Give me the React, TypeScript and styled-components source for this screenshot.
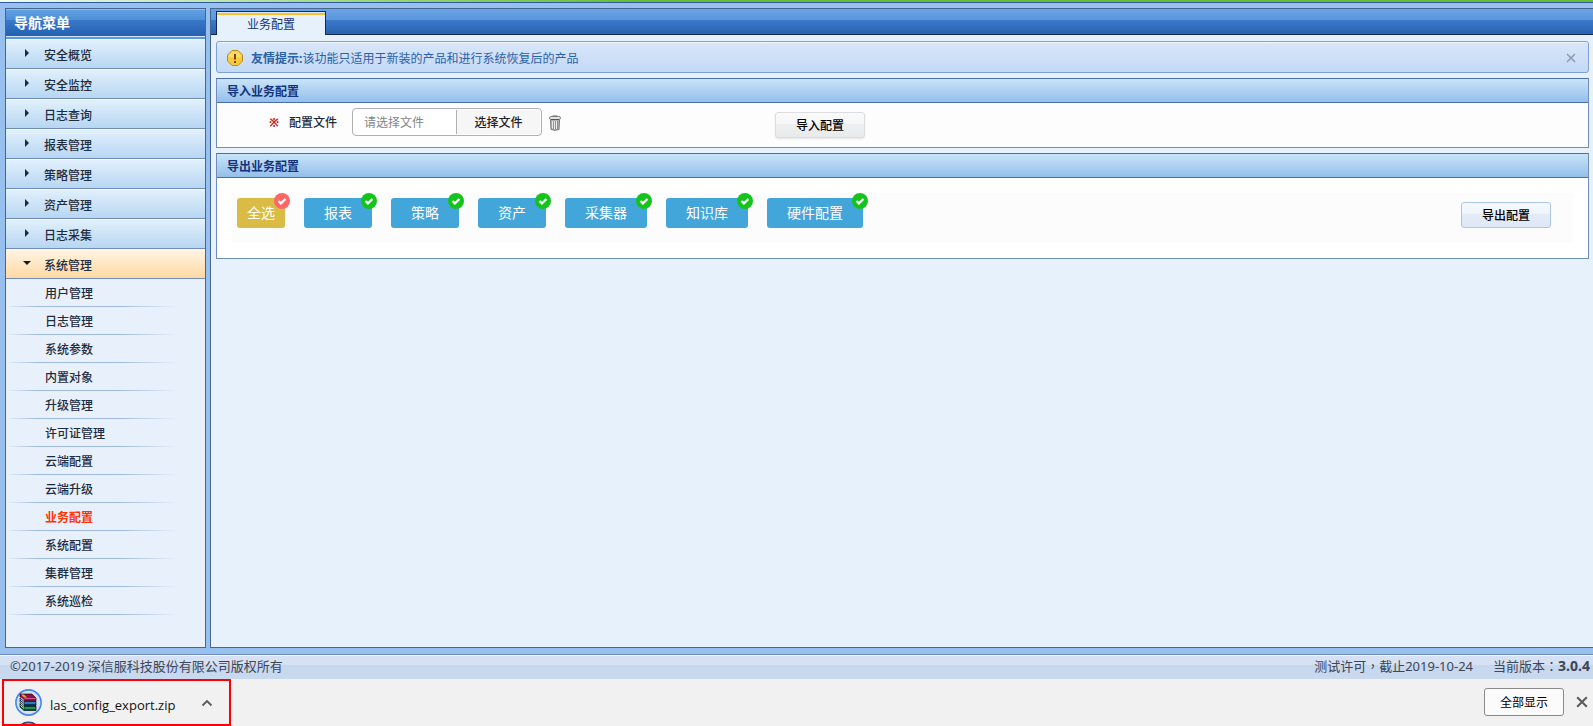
import React from "react";
import styled, { createGlobalStyle } from "styled-components";

const Global = createGlobalStyle`
  *, *::before, *::after { box-sizing: border-box; }
  body { margin: 0; background: #98c0ee; }
  body, button, input { font-family: "Noto Sans", "Noto Sans CJK SC", sans-serif; font-size: 12px; }
  button { cursor: pointer; margin: 0; }
  ul { list-style: none; margin: 0; padding: 0; }
  h2, p { margin: 0; }
  a { color: inherit; text-decoration: none; }
`;

const Page = styled.div`
  display: flex;
  flex-direction: column;
  min-height: 100vh;
  color: #1e2c40;
`;

const TopStrip = styled.div`
  height: 3px;
  border-bottom: 1px solid #2c5a9c;
  background: linear-gradient(90deg, #f4fbf2 0, #a6da8c 320px, #66bd30 640px);
`;

const Workspace = styled.div`
  flex: 1;
  display: flex;
  gap: 4px;
  padding: 5px 0 6px 5px;
`;

const Sidebar = styled.nav`
  width: 201px;
  flex: none;
  border: 1px solid #456592;
  background: #e8f0fc;
`;

const SidebarTitle = styled.h2`
  height: 30px;
  padding: 0 8px;
  border-top: 1px solid #8fbcf0;
  border-bottom: 2px solid #5a9be0;
  background: linear-gradient(#5f9fe2 0, #4f8fd8 10px, #3a78c8 10px, #2560b2 26px, #d5e8fb 26px);
  color: #fff;
  font-size: 14px;
  line-height: 26px;
`;

const MenuItem = styled.a<{ $open?: boolean }>`
  display: flex;
  align-items: center;
  height: 30px;
  padding: 1px 0 0 17px;
  gap: 15px;
  border-top: 1px solid #f4faff;
  border-bottom: 1px solid #6f8db8;
  background: ${(p) =>
    p.$open ? "linear-gradient(#fff4e2, #ffd9a4)" : "linear-gradient(#e1f0fc, #b7d6f2)"};
  font-weight: 500;
`;

const Arrow = styled.svg`
  width: 6px;
  height: 8px;
  overflow: visible;
  margin-bottom: 4px;
`;

const SubItem = styled.a<{ $active?: boolean }>`
  display: block;
  height: 28px;
  padding-left: 39px;
  line-height: 30px;
  font-weight: ${(p) => (p.$active ? 700 : 500)};
  color: ${(p) => (p.$active ? "#ff3300" : "inherit")};
  background: linear-gradient(90deg, transparent, #9db9dc 32px, #9db9dc 112px, transparent 172px)
    bottom / 100% 1px no-repeat;
`;

const Main = styled.main`
  flex: 1;
  min-width: 0;
  border: 1px solid #456592;
  border-right: 0;
  background: #e6f1fc;
`;

const TabBar = styled.div`
  display: flex;
  align-items: flex-end;
  height: 26px;
  padding-left: 5px;
  background: linear-gradient(#6ba3e4 0, #5b96dc 11px, #3d7acb 11px, #2a62b2 25px, #12295a 25px);
`;

const Tab = styled.button`
  width: 110px;
  height: 24px;
  padding: 3px 0 0;
  border: 1px solid #12295a;
  border-bottom: 0;
  background: linear-gradient(#dce8f6 1px, #fbc02d 1px, #fbc02d 3px, #e6f1fc 3px);
  color: #14327c;
  line-height: 20px;
`;

const Content = styled.div`
  display: flex;
  flex-direction: column;
  gap: 5px;
  padding: 6px 4px 6px 5px;
`;

const Notice = styled.div`
  display: flex;
  align-items: center;
  height: 32px;
  padding: 2px 12px 0 10px;
  gap: 8px;
  border: 1px solid #7aa3d2;
  border-radius: 3px;
  box-shadow: inset 0 1px #f2f7fe;
  background: linear-gradient(#d8e6fa, #c5d9f4);
  color: #2a62a8;
  svg { flex: none; }
`;

const NoticeText = styled.p`
  flex: 1;
`;

const IconButton = styled.button`
  display: flex;
  padding: 0;
  border: 0;
  background: none;
`;

const Panel = styled.section`
  border: 1px solid #6f8db8;
  border-top-color: #4a70a4;
  background: #fff;
`;

const PanelTitle = styled.h2`
  height: 24px;
  padding-left: 10px;
  border-bottom: 1px solid #4a70a4;
  background: linear-gradient(#c8e4f9, #94bfea);
  color: #14327c;
  font-size: 12px;
  line-height: 25px;
`;

const ImportRow = styled.form`
  display: flex;
  align-items: flex-start;
  height: 44px;
  padding: 5px 0 0 52px;
  background: #fdfdfd;
`;

const Required = styled.span`
  width: 20px;
  color: #c8281e;
  font-weight: 700;
  line-height: 30px;
`;

const FieldLabel = styled.label`
  width: 63px;
  line-height: 30px;
  font-weight: 500;
`;

const FilePicker = styled.div`
  display: flex;
  width: 190px;
  height: 28px;
  margin-right: 7px;
  padding: 1px;
  border: 1px solid #b0b0b0;
  border-radius: 4px;
  background: #fff;
`;

const FileInput = styled.input`
  width: 103px;
  padding: 0 0 0 10px;
  border: 0;
  border-right: 1px solid #b0b0b0;
  background: transparent;
  &::placeholder { color: #858585; opacity: 1; }
`;

const BrowseButton = styled.button`
  flex: 1;
  padding: 0;
  border: 0;
  background: #f6f6f6;
  color: #222;
  font-weight: 500;
`;

const ActionButton = styled.button<{ $blue?: boolean }>`
  width: 90px;
  height: 26px;
  padding: 0;
  border: 1px solid ${(p) => (p.$blue ? "#a9c6e6" : "#dcdde0")};
  border-radius: 3px;
  background: ${(p) =>
    p.$blue
      ? "linear-gradient(#f6fafe 0, #eff4fc 46%, #e3ebf7 46%, #dfe8f5)"
      : "linear-gradient(#fafafa 0, #f5f6f6 46%, #eeeff0 46%, #e9eaec)"};
  box-shadow: ${(p) => (p.$blue ? "none" : "0 1px 2px #e4e4e4")};
  color: #000;
  font-weight: 500;
`;

const ImportAction = styled.div`
  margin: 4px 0 0 214px;
`;

const TrashButton = styled(IconButton)`
  margin-top: 7px;
`;

const ExportArea = styled.div`
  display: flex;
  align-items: flex-start;
  height: 50px;
  margin: 15px;
  padding: 5px 22px 0 5px;
  gap: 19px;
  background: #fcfcfc;
`;

const TagLabel = styled.label<{ $all?: boolean }>`
  position: relative;
  height: 30px;
  padding: 0 ${(p) => (p.$all ? 10 : 20)}px;
  border-radius: 3px;
  background: ${(p) => (p.$all ? "#dabb46" : "#43a6db")};
  color: #fff;
  font-size: 14px;
  line-height: 30px;
  white-space: nowrap;
`;

const HiddenCheck = styled.input`
  position: absolute;
  inset: 0;
  margin: 0;
  opacity: 0;
`;

const Badge = styled.svg`
  position: absolute;
  top: -5px;
  right: -5px;
`;

const ExportAction = styled.div`
  margin: 4px 0 0 auto;
`;

const Footer = styled.footer`
  display: flex;
  align-items: flex-start;
  height: 25px;
  padding: 0 3px 0 10px;
  gap: 20px;
  border-top: 1px solid #6f8db8;
  box-shadow: inset 0 1px #f0f6fd;
  background: linear-gradient(#d6e2f3 0, #d6e2f3 10px, #c6d7ee 10px, #c9d9ef);
  color: #3c4656;
  font-size: 13px;
  line-height: 22px;
`;

const Copyright = styled.span`
  flex: 1;
`;

const Punctuation = styled.span`
  font-family: "Noto Sans CJK TC", sans-serif;
`;

const Version = styled.b`
  font-size: 14px;
`;

const DownloadBar = styled.div`
  display: flex;
  align-items: center;
  height: 47px;
  padding: 0 5px 0 2px;
  background: #f1f1f1;
  color: #111;
`;

const DownloadItem = styled.div`
  display: flex;
  align-items: center;
  width: 229px;
  height: 47px;
  padding: 0 16px 0 11px;
  border: 2px solid #fb0007;
  overflow: hidden;
`;

const FileIcon = styled.svg`
  flex: none;
  align-self: flex-start;
  margin-top: 8px;
`;

const FileName = styled.a`
  flex: 1;
  margin-top: 4px;
  padding-left: 8px;
  font-family: "Open Sans", "Noto Sans", sans-serif;
  font-size: 13px;
`;

const DownloadActions = styled.div`
  display: flex;
  align-items: center;
  gap: 12px;
  margin: 0 0 2px auto;
`;

const ShowAll = styled.button`
  width: 80px;
  height: 28px;
  padding: 0;
  border: 1px solid #8a8a8a;
  border-radius: 3px;
  background: #fbfbfb;
  color: #000;
`;

const menu = ["安全概览", "安全监控", "日志查询", "报表管理", "策略管理", "资产管理", "日志采集"];
const subMenu = [
  "用户管理", "日志管理", "系统参数", "内置对象", "升级管理", "许可证管理",
  "云端配置", "云端升级", "业务配置", "系统配置", "集群管理", "系统巡检",
];
const exportTypes = ["报表", "策略", "资产", "采集器", "知识库", "硬件配置"];

function Tag({ text, all }: { text: string; all?: boolean }) {
  return (
    <TagLabel $all={all}>
      <HiddenCheck type="checkbox" defaultChecked />
      {text}
      <Badge width="16" height="16" viewBox="0 0 16 16" aria-hidden="true">
        <circle cx="8" cy="8" r="8" fill={all ? "#ff6666" : "#14c41c"} />
        <path d="M4.5 8l2.4 2.4 4.6-4.4" fill="none" stroke="#fff" strokeWidth="2.3" />
      </Badge>
    </TagLabel>
  );
}

function WarningIcon() {
  return (
    <svg width="16" height="16" viewBox="0 0 16 16" aria-hidden="true">
      <path d="M5 .5h6L15.500 5v6L11 15.500H5L.5 11V5z" fill="#f3cb3a" stroke="#c08c14" />
      <path d="M5.400 1.600h5.200l3.800 3.800v2.100H1.600V5.400z" fill="#f9dc66" />
      <path d="M7 4h2v5.500H7zM7 11h2v2H7z" fill="#8a3c00" />
    </svg>
  );
}

function CrossIcon({ size, color, weight }: { size: number; color: string; weight: number }) {
  return (
    <svg width={size} height={size} viewBox="0 0 10 10" aria-hidden="true">
      <path d="M1 1l8 8M9 1l-8 8" stroke={color} strokeWidth={weight} fill="none" />
    </svg>
  );
}

function TrashIcon() {
  return (
    <svg width="12" height="16" viewBox="0 0 12 16" aria-hidden="true">
      <path d="M1.500 4.500h9l-.5 10q-4 1.600-8 0z" fill="#b4b4b4" stroke="#777" />
      <path d="M3.500 6v7.500M5.500 6v8M7.500 6v8" stroke="#e9e9e9" />
      <path d="M4.500 6v8M6.500 6v8M8.500 6v8" stroke="#8a8a8a" strokeWidth=".8" />
      <rect x=".5" y="1.500" width="11" height="3" rx="1.500" fill="#e4e4e4" stroke="#8a8a8a" />
      <path d="M2 4.500h8" stroke="#555" />
      <path d="M3.500 1h5" stroke="#666" />
    </svg>
  );
}

function ArchiveIcon() {
  return (
    <FileIcon width="27" height="36" viewBox="0 0 27 36" aria-hidden="true">
      <circle cx="13.500" cy="13.500" r="12.600" fill="#d4e0f4" stroke="#4285f4" strokeWidth="1.600" />
      <path d="M5 5h12l4 4v3H9L5 8z" fill="#8e1244" stroke="#1c0a14" strokeWidth=".7" />
      <path d="M6 5.500h3l3 3H9z" fill="#e0b020" />
      <path d="M9.500 9.500h11" stroke="#d8509a" />
      <path d="M5 9l4 3.500h12v4H9L5 13z" fill="#0b2f60" stroke="#101010" strokeWidth=".7" />
      <path d="M9.500 14h11" stroke="#2e9bd0" strokeWidth="1.500" />
      <path d="M5 14l4 3h12v4.500H9L5 18z" fill="#06502c" stroke="#101010" strokeWidth=".7" />
      <path d="M9.500 19h11" stroke="#20b060" strokeWidth="1.500" />
      <path d="M5.500 8.500l3.500 3M5.500 10.500l3.500 3M5.500 12.500l3.500 3M5.500 14.500l3.500 3M5.500 16.500l3.500 3" stroke="#f4f4f4" strokeWidth=".9" />
      <circle cx="13.500" cy="46" r="12.600" fill="#b8c8e0" stroke="#2c4a7c" strokeWidth="1.600" />
    </FileIcon>
  );
}

export default function App() {
  return (
    <>
      <Global />
      <Page>
        <TopStrip />
        <Workspace>
          <Sidebar>
            <SidebarTitle>导航菜单</SidebarTitle>
            <ul>
              {menu.map((m) => (
                <li key={m}>
                  <MenuItem href="#">
                    <Arrow viewBox="0 0 6 8"><path d="M2 0l4 4-4 4z" fill="#1a2a44" /></Arrow>
                    {m}
                  </MenuItem>
                </li>
              ))}
              <li>
                <MenuItem href="#" $open>
                  <Arrow viewBox="0 0 6 8"><path d="M0 2h8L4 6z" fill="#1a1a1a" /></Arrow>
                  系统管理
                </MenuItem>
                <ul>
                  {subMenu.map((s) => (
                    <li key={s}><SubItem href="#" $active={s === "业务配置"}>{s}</SubItem></li>
                  ))}
                </ul>
              </li>
            </ul>
          </Sidebar>
          <Main>
            <TabBar><Tab>业务配置</Tab></TabBar>
            <Content>
              <Notice>
                <WarningIcon />
                <NoticeText><b>友情提示:</b>该功能只适用于新装的产品和进行系统恢复后的产品</NoticeText>
                <IconButton aria-label="关闭提示"><CrossIcon size={10} color="#8d9bb0" weight={1.6} /></IconButton>
              </Notice>
              <Panel>
                <PanelTitle>导入业务配置</PanelTitle>
                <ImportRow onSubmit={(e) => e.preventDefault()}>
                  <Required>※</Required>
                  <FieldLabel htmlFor="config-file">配置文件</FieldLabel>
                  <FilePicker>
                    <FileInput id="config-file" placeholder="请选择文件" readOnly />
                    <BrowseButton type="button">选择文件</BrowseButton>
                  </FilePicker>
                  <TrashButton type="button" aria-label="清除"><TrashIcon /></TrashButton>
                  <ImportAction><ActionButton>导入配置</ActionButton></ImportAction>
                </ImportRow>
              </Panel>
              <Panel>
                <PanelTitle>导出业务配置</PanelTitle>
                <ExportArea>
                  <Tag text="全选" all />
                  {exportTypes.map((t) => <Tag key={t} text={t} />)}
                  <ExportAction><ActionButton $blue>导出配置</ActionButton></ExportAction>
                </ExportArea>
              </Panel>
            </Content>
          </Main>
        </Workspace>
        <Footer>
          <Copyright>©2017-2019 深信服科技股份有限公司版权所有</Copyright>
          <span>测试许可<Punctuation>，</Punctuation>截止2019-10-24</span>
          <span>当前版本<Punctuation>：</Punctuation><Version>3.0.4</Version></span>
        </Footer>
        <DownloadBar>
          <DownloadItem>
            <ArchiveIcon />
            <FileName href="#">las_config_export.zip</FileName>
            <IconButton aria-label="更多">
              <svg width="12" height="8" viewBox="0 0 12 8"><path d="M1.500 6.500L6 2l4.500 4.500" fill="none" stroke="#5a5a5a" strokeWidth="1.800" /></svg>
            </IconButton>
          </DownloadItem>
          <DownloadActions>
            <ShowAll>全部显示</ShowAll>
            <IconButton aria-label="关闭"><CrossIcon size={12} color="#5a5a5a" weight={1.7} /></IconButton>
          </DownloadActions>
        </DownloadBar>
      </Page>
    </>
  );
}
